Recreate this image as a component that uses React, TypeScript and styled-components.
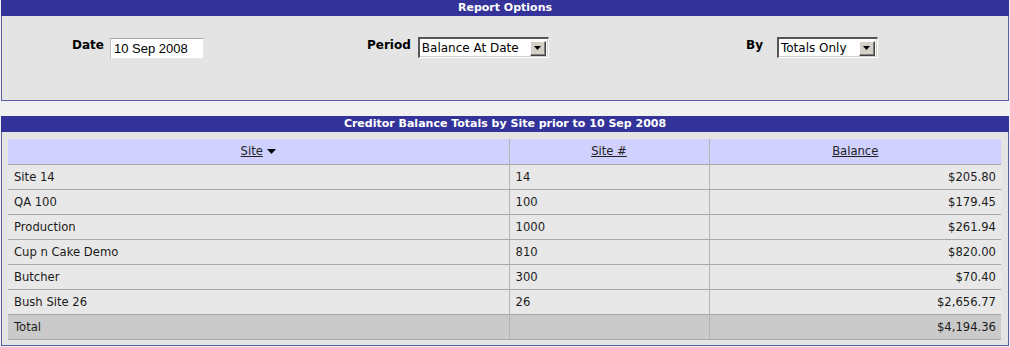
import React from "react";
import styled, { createGlobalStyle } from "styled-components";

const GlobalStyle = createGlobalStyle`
  html, body { margin: 0; padding: 0; background: #f1f1f1; }
  body { font-family: "DejaVu Sans", Verdana, sans-serif; }
`;

const Page = styled.div`
  width: 1008px;
  margin-left: 1px;
  display: flex;
  flex-direction: column;
  gap: 15px;
`;

const Panel = styled.section`
  box-sizing: border-box;
  width: 100%;
  background: #e4e4e4;
  border: 1px solid #5b5ba3;
  border-top: none;
  display: flex;
  flex-direction: column;
`;

const TitleBar = styled.div`
  height: 16px;
  margin: 0 -1px;
  background: #333399;
  color: #ffffff;
  font-family: "DejaVu Sans", Verdana, sans-serif;
  font-weight: bold;
  font-size: 11px;
  line-height: 16px;
  text-align: center;
`;

const OptionsRow = styled.div`
  height: 84px;
  box-sizing: border-box;
  padding-top: 21px;
  display: grid;
  grid-template-columns: 340px 340px 1fr;
`;

const Field = styled.div<{ $left: number; $gap: number }>`
  display: flex;
  align-items: flex-start;
  padding-left: ${(p) => p.$left}px;
  gap: ${(p) => p.$gap}px;
`;

const Label = styled.label`
  font-family: "DejaVu Sans", Verdana, sans-serif;
  font-weight: bold;
  font-size: 12px;
  line-height: 15px;
  color: #000;
  padding-top: 1px;
`;

const TextInput = styled.div`
  box-sizing: border-box;
  width: 94px;
  height: 21px;
  margin-top: 1px;
  background: #fff;
  border-top: 1px solid #a5a5a5;
  border-left: 1px solid #c0c0c0;
  border-right: 1px solid #e8e8e8;
  border-bottom: 1px solid #e8e8e8;
  font-family: "Liberation Sans", Arial, sans-serif;
  font-size: 13px;
  line-height: 20px;
  padding-left: 3px;
  color: #000;
`;

const SelectBox = styled.div<{ $w: number }>`
  box-sizing: border-box;
  width: ${(p) => p.$w}px;
  height: 21px;
  background: #fff;
  border-top: 2px solid #555;
  border-left: 2px solid #555;
  border-right: 1px solid #fff;
  border-bottom: 1px solid #fff;
  box-shadow: inset -1px -1px 0 #d4d0c8;
  display: flex;
  align-items: center;
  justify-content: space-between;
  padding: 0 2px 0 2px;
`;

const SelectText = styled.span`
  font-family: "DejaVu Sans", Verdana, sans-serif;
  font-size: 12px;
  color: #000;
  line-height: 16px;
`;

const DropButton = styled.span`
  box-sizing: border-box;
  width: 16px;
  height: 15px;
  background: #d4d0c8;
  border-top: 1px solid #fff;
  border-left: 1px solid #fff;
  border-right: 1px solid #404040;
  border-bottom: 1px solid #404040;
  box-shadow: inset -1px -1px 0 #808080;
  display: flex;
  align-items: center;
  justify-content: center;
`;

const ContentArea = styled.div`
  padding: 7px 7px 5px 6px;
`;

const Table = styled.table`
  width: 993px;
  border-collapse: collapse;
  table-layout: fixed;
  font-family: "DejaVu Sans", Verdana, sans-serif;
  font-size: 11.6px;
  color: #1a1a1a;
`;

const HeadCell = styled.th<{ $last?: boolean }>`
  box-sizing: border-box;
  height: 25px;
  padding: 0 5px;
  background: #d1d1ff;
  font-weight: normal;
  text-align: center;
  border-bottom: 1px solid #a8a8a8;
  border-right: ${(p) => (p.$last ? "none" : "1px solid #b4b4b4")};
`;

const SortLink = styled.a`
  color: #222;
  text-decoration: underline;
  cursor: pointer;
  display: inline-flex;
  align-items: center;
  gap: 4px;
`;

const Row = styled.tr<{ $total?: boolean }>`
  background: ${(p) => (p.$total ? "#cacaca" : "#e8e8e8")};
`;

const Cell = styled.td<{ $right?: boolean; $last?: boolean }>`
  height: 25px;
  box-sizing: border-box;
  padding: 0 5px 0 6px;
  text-align: ${(p) => (p.$right ? "right" : "left")};
  border-bottom: 1px solid #a8a8a8;
  border-right: ${(p) => (p.$last ? "none" : "1px solid #b4b4b4")};
  white-space: nowrap;
`;

const Arrow = () => (
  <svg width="9" height="5" viewBox="0 0 9 5">
    <polygon points="0,0 9,0 4.5,5" fill="#000" />
  </svg>
);

const SmallArrow = () => (
  <svg width="7" height="4" viewBox="0 0 7 4">
    <polygon points="0,0 7,0 3.5,4" fill="#000" />
  </svg>
);

const rows = [
  { site: "Site 14", num: "14", bal: "$205.80" },
  { site: "QA 100", num: "100", bal: "$179.45" },
  { site: "Production", num: "1000", bal: "$261.94" },
  { site: "Cup n Cake Demo", num: "810", bal: "$820.00" },
  { site: "Butcher", num: "300", bal: "$70.40" },
  { site: "Bush Site 26", num: "26", bal: "$2,656.77" },
];

export default function App() {
  return (
    <>
      <GlobalStyle />
      <Page>
        <Panel>
          <TitleBar>Report Options</TitleBar>
          <OptionsRow>
            <Field $left={70} $gap={6}>
              <Label>Date</Label>
              <TextInput>10 Sep 2008</TextInput>
            </Field>
            <Field $left={25} $gap={7}>
              <Label>Period</Label>
              <SelectBox $w={131}>
                <SelectText>Balance At Date</SelectText>
                <DropButton>
                  <SmallArrow />
                </DropButton>
              </SelectBox>
            </Field>
            <Field $left={64} $gap={14}>
              <Label>By</Label>
              <SelectBox $w={101}>
                <SelectText>Totals Only</SelectText>
                <DropButton>
                  <SmallArrow />
                </DropButton>
              </SelectBox>
            </Field>
          </OptionsRow>
        </Panel>

        <Panel>
          <TitleBar>Creditor Balance Totals by Site prior to 10 Sep 2008</TitleBar>
          <ContentArea>
            <Table>
              <colgroup>
                <col style={{ width: 501 }} />
                <col style={{ width: 200 }} />
                <col style={{ width: 292 }} />
              </colgroup>
              <thead>
                <tr>
                  <HeadCell>
                    <SortLink>
                      Site <Arrow />
                    </SortLink>
                  </HeadCell>
                  <HeadCell>
                    <SortLink>Site #</SortLink>
                  </HeadCell>
                  <HeadCell $last>
                    <SortLink>Balance</SortLink>
                  </HeadCell>
                </tr>
              </thead>
              <tbody>
                {rows.map((r) => (
                  <Row key={r.site}>
                    <Cell>{r.site}</Cell>
                    <Cell>{r.num}</Cell>
                    <Cell $right $last>
                      {r.bal}
                    </Cell>
                  </Row>
                ))}
                <Row $total>
                  <Cell>Total</Cell>
                  <Cell></Cell>
                  <Cell $right $last>
                    $4,194.36
                  </Cell>
                </Row>
              </tbody>
            </Table>
          </ContentArea>
        </Panel>
      </Page>
    </>
  );
}
